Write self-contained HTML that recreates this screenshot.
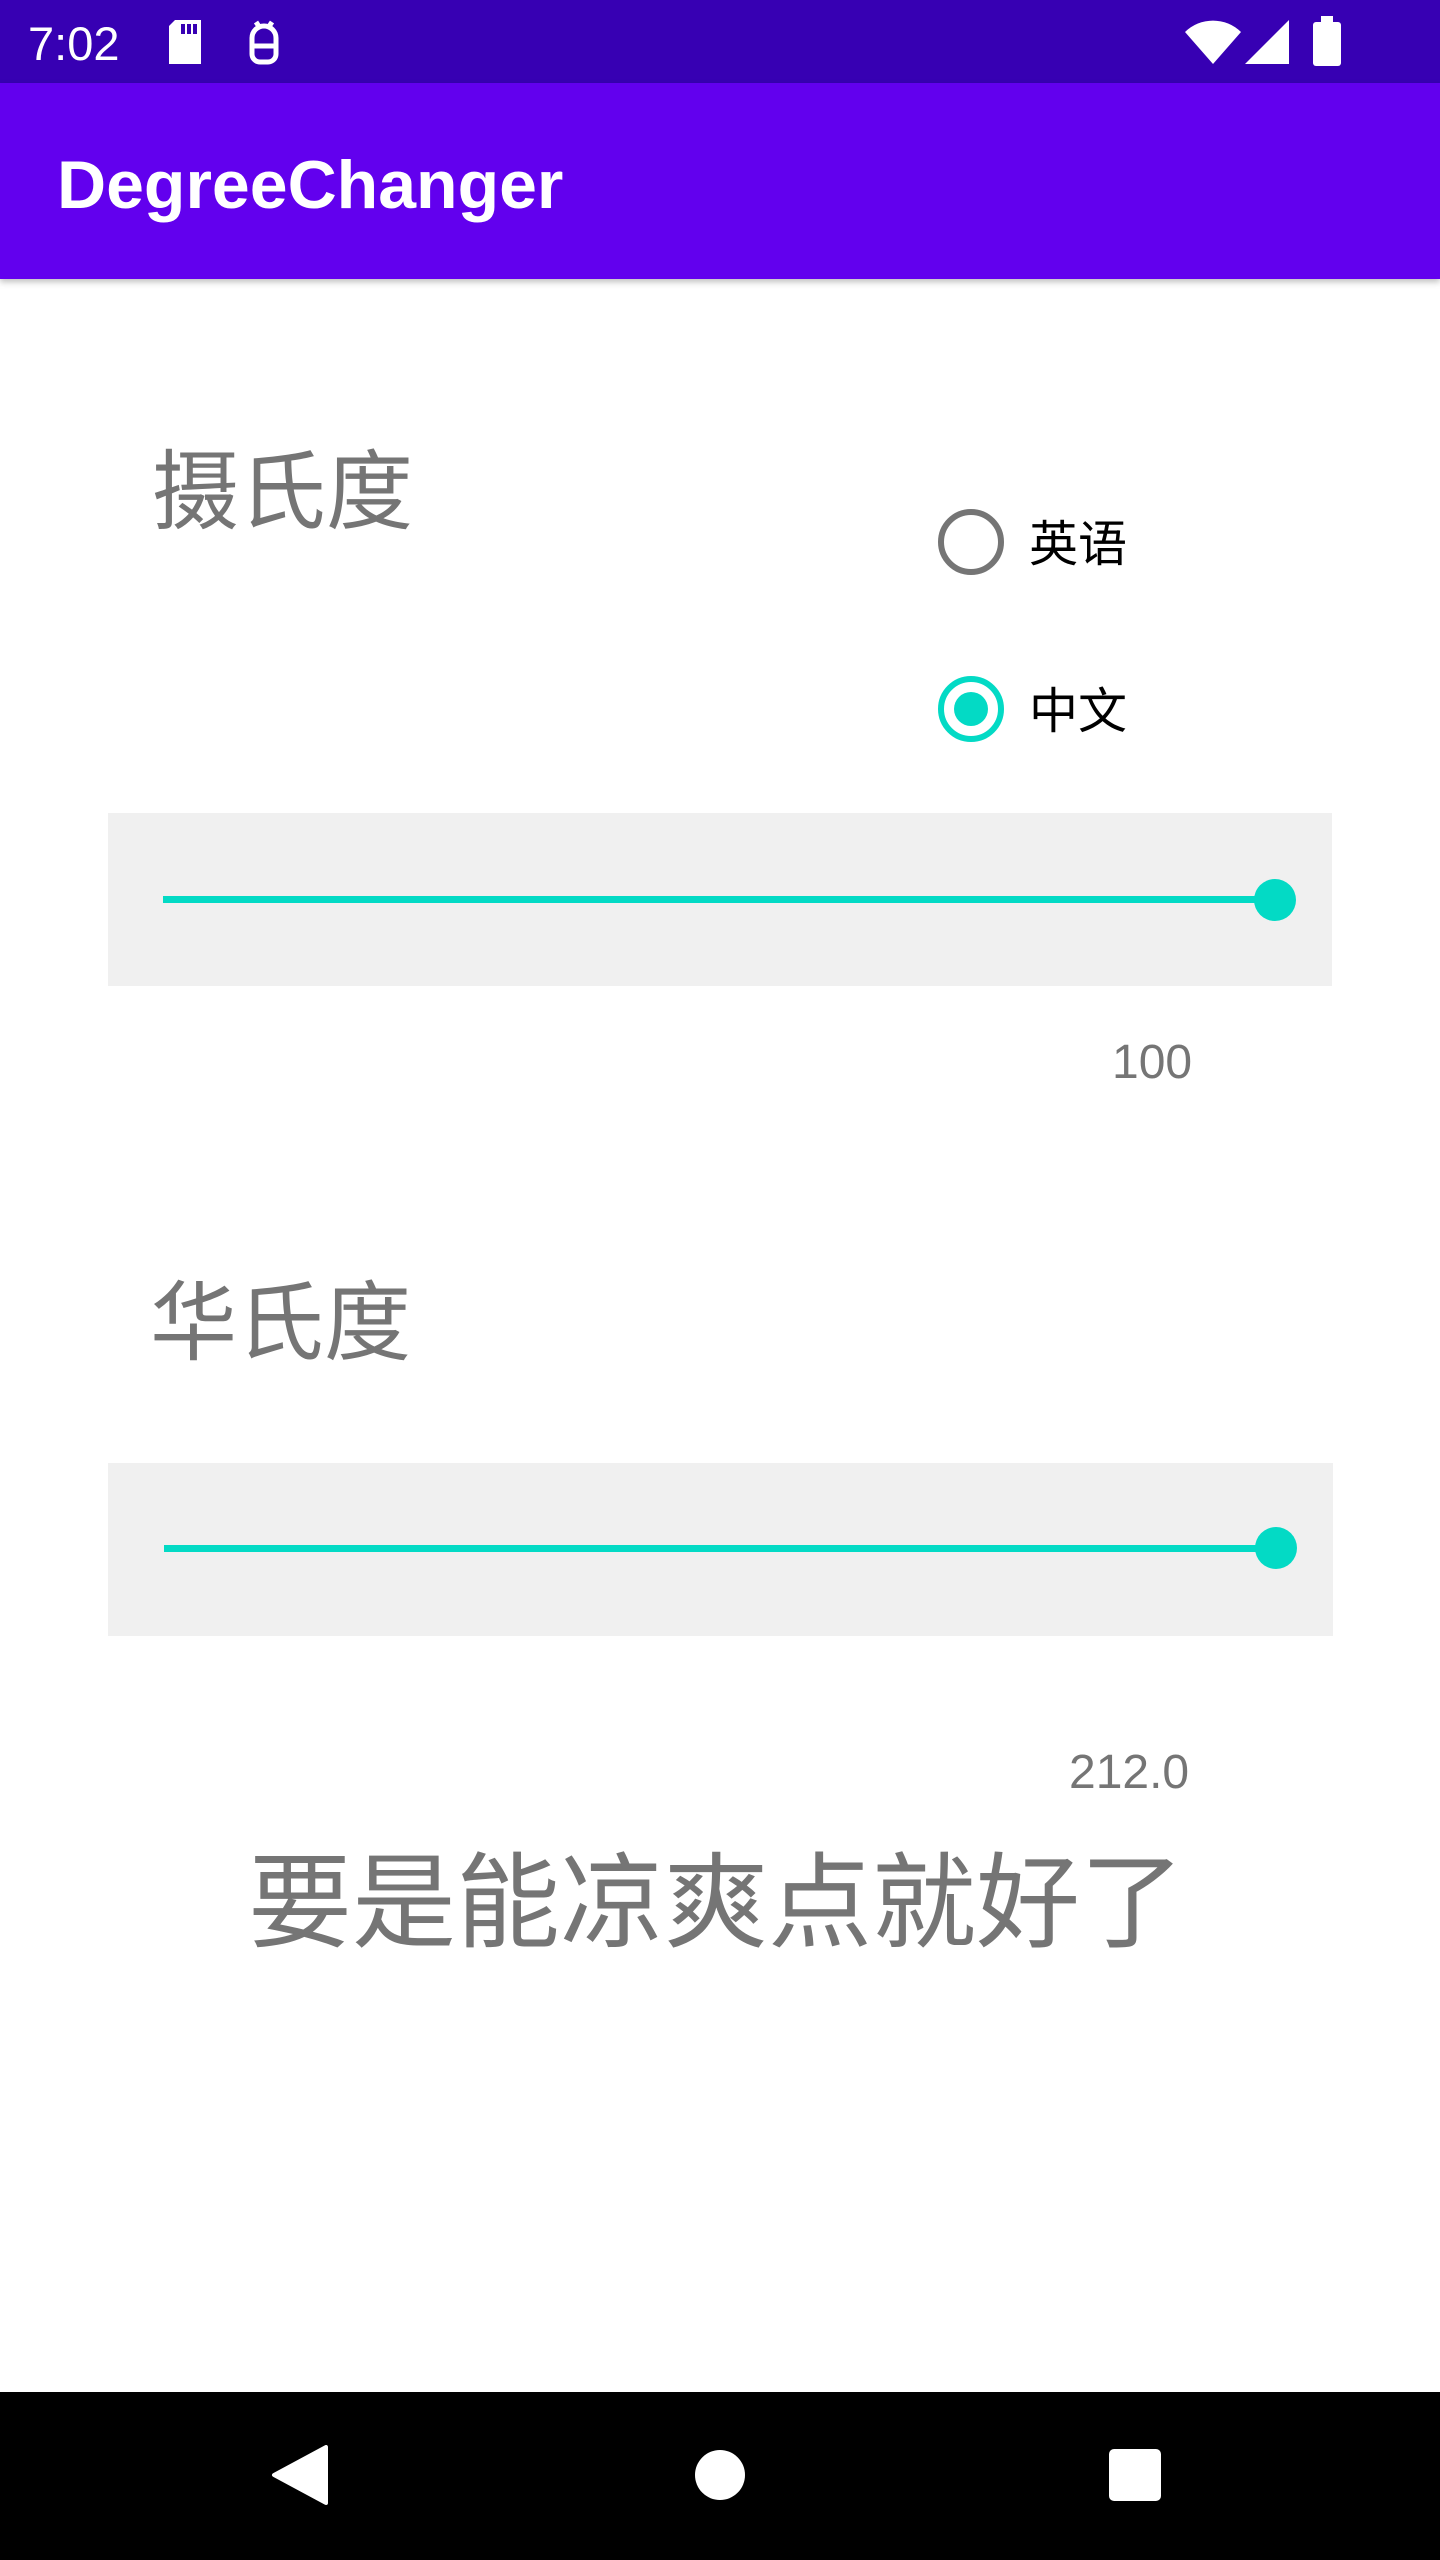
<!DOCTYPE html>
<html><head><meta charset="utf-8"><style>
*{margin:0;padding:0;box-sizing:border-box}
body{width:1440px;height:2560px;background:#fff;position:relative;overflow:hidden;font-family:"Liberation Sans","Noto Sans CJK SC",sans-serif}
.a{position:absolute}
.cjk{font-family:"Noto Sans CJK SC",sans-serif;color:#757575;white-space:nowrap;line-height:1}
</style></head><body>
<div class="a" style="left:0;top:0;width:1440px;height:83px;background:#3700B3"></div>
<div class="a" style="left:28px;top:16px;font-size:47px;color:#fff">7:02</div>
<svg class="a" style="left:165px;top:18px" width="40" height="48" viewBox="0 0 20 24"><path d="M5 1h13v22H2V4z" fill="#fff"/><rect x="8" y="3" width="2" height="5" fill="#3700B3"/><rect x="11" y="3" width="2" height="5" fill="#3700B3"/><rect x="14" y="3" width="2" height="5" fill="#3700B3"/></svg>
<svg class="a" style="left:244px;top:18px" width="40" height="48" viewBox="0 0 20 24" fill="none" stroke="#fff" stroke-width="2.5"><path d="M4 10a6 6 0 0 1 12 0v8a4 4 0 0 1-4 4H8a4 4 0 0 1-4-4z"/><path d="M4 14h12M6 2l2 3M14 2l-2 3"/></svg>
<svg class="a" style="left:1185px;top:20px" width="56" height="44" viewBox="0 0 28 22"><path d="M0 6a20 20 0 0 1 28 0L14 22z" fill="#fff"/></svg>
<svg class="a" style="left:1245px;top:20px" width="44" height="44" viewBox="0 0 22 22"><path d="M22 0v22H0z" fill="#fff"/></svg>
<svg class="a" style="left:1313px;top:16px" width="28" height="50" viewBox="0 0 14 25"><rect x="4" y="0" width="6" height="3" fill="#fff"/><rect x="0" y="3" width="14" height="22" rx="1.5" fill="#fff"/></svg>
<div class="a" style="left:0;top:83px;width:1440px;height:196px;background:#6200EE;box-shadow:0 3px 6px rgba(0,0,0,.25)"></div>
<div class="a" style="left:57px;top:151px;font-size:68px;color:#fff;font-weight:bold;line-height:1">DegreeChanger</div>
<div class="a cjk" style="left:152px;top:442px;font-size:87px">摄氏度</div>
<svg class="a" style="left:930px;top:500px" width="90" height="260"><circle cx="41" cy="42" r="30" fill="none" stroke="#757575" stroke-width="6"/><circle cx="41" cy="209" r="30" fill="none" stroke="#03DAC5" stroke-width="6"/><circle cx="41" cy="209" r="17" fill="#03DAC5"/></svg>
<div class="a cjk" style="left:1029px;top:516px;font-size:49px;color:#000">英语</div>
<div class="a cjk" style="left:1029px;top:683px;font-size:49px;color:#000">中文</div>
<div class="a" style="left:108px;top:813px;width:1224px;height:173px;background:#f0f0f0"></div>
<div class="a" style="left:163px;top:896px;width:1112px;height:7px;background:#03DAC5"></div>
<div class="a" style="left:1254px;top:879px;width:42px;height:42px;border-radius:50%;background:#03DAC5"></div>
<div class="a" style="left:1112px;top:1039px;font-size:48px;color:#757575;line-height:1">100</div>
<div class="a cjk" style="left:150px;top:1273px;font-size:87px">华氏度</div>
<div class="a" style="left:108px;top:1463px;width:1225px;height:173px;background:#f0f0f0"></div>
<div class="a" style="left:164px;top:1545px;width:1112px;height:7px;background:#03DAC5"></div>
<div class="a" style="left:1255px;top:1527px;width:42px;height:42px;border-radius:50%;background:#03DAC5"></div>
<div class="a" style="left:1069px;top:1749px;font-size:48px;color:#757575;line-height:1">212.0</div>
<div class="a cjk" style="left:248px;top:1842px;font-size:104px">要是能凉爽点就好了</div>
<div class="a" style="left:0;top:2392px;width:1440px;height:168px;background:#000"></div>
<svg class="a" style="left:270px;top:2445px" width="60" height="60" viewBox="0 0 60 60"><path d="M56 2v56L4 30z" fill="#fff" stroke="#fff" stroke-width="4" stroke-linejoin="round"/></svg>
<div class="a" style="left:695px;top:2450px;width:50px;height:50px;border-radius:50%;background:#fff"></div>
<div class="a" style="left:1109px;top:2449px;width:52px;height:52px;border-radius:5px;background:#fff"></div>
</body></html>
